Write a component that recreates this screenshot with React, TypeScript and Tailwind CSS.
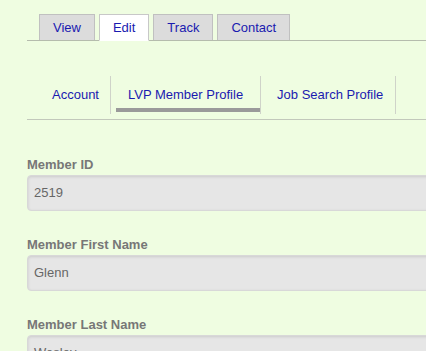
import React from 'react';

const tabs = [
    { label: 'View', active: false },
    { label: 'Edit', active: true },
    { label: 'Track', active: false },
    { label: 'Contact', active: false },
];

const subTabs = [
    { label: 'Account', active: false, cls: 'pl-[13px] pr-[11px]' },
    { label: 'LVP Member Profile', active: true, cls: 'px-[17px]' },
    { label: 'Job Search Profile', active: false, cls: 'pl-[16px] pr-[12px]' },
];

const fields = [
    { label: 'Member ID', value: '2519' },
    { label: 'Member First Name', value: 'Glenn' },
    { label: 'Member Last Name', value: 'Wesley' },
];

const App: React.FC = () => {
    return (
        <div className="min-h-screen h-[351px] overflow-hidden bg-[#effde1] pl-[27px] text-[13px] font-['Liberation_Sans',Arial,sans-serif]">
            {/* primary tabs */}
            <div className="pt-[14px] border-b border-[#b5bcad] pl-[12px] flex gap-[4px]">
                {tabs.map((t) => (
                    <div
                        key={t.label}
                        className={
                            t.active
                                ? 'h-[27px] -mb-px px-[13px] flex items-center bg-white border border-[#c8c8c8] border-b-white text-[#1a1ab0]'
                                : 'h-[26px] px-[13px] flex items-center bg-[#dcdcdc] border border-[#c0c0c0] border-b-0 text-[#1a1ab0]'
                        }
                    >
                        {t.label}
                    </div>
                ))}
            </div>

            {/* secondary tabs */}
            <div className="pt-[35px] pb-[5px] pl-[12px] border-b border-[#c2c8bb] flex">
                {subTabs.map((t, i) => (
                    <div key={t.label} className="flex">
                        {i > 0 && <div className="w-px h-[38px] bg-[#cfd3c9]" />}
                        <div className={`relative h-[38px] flex items-center text-[#1a1ab0] ${t.cls}`}>
                            {t.label}
                            {t.active && <div className="absolute left-[5px] right-0 bottom-[2px] h-[4px] bg-[#9a9a9a]" />}
                        </div>
                    </div>
                ))}
                <div className="w-px h-[38px] bg-[#cfd3c9]" />
            </div>

            {/* form */}
            <div className="pt-[37px] flex flex-col gap-[26px]">
                {fields.map((f) => (
                    <div key={f.label} className="flex flex-col gap-[2px]">
                        <label className="font-bold text-[#777777] leading-[16px]">{f.label}</label>
                        <div className="w-[430px] h-[36px] pl-[6px] flex items-center bg-[#e6e6e6] border border-[#d8d8d8] rounded-[4px] shadow-[inset_0_1px_3px_rgba(0,0,0,0.12)] text-[#666666]">
                            {f.value}
                        </div>
                    </div>
                ))}
            </div>
        </div>
    );
};

export default App;
